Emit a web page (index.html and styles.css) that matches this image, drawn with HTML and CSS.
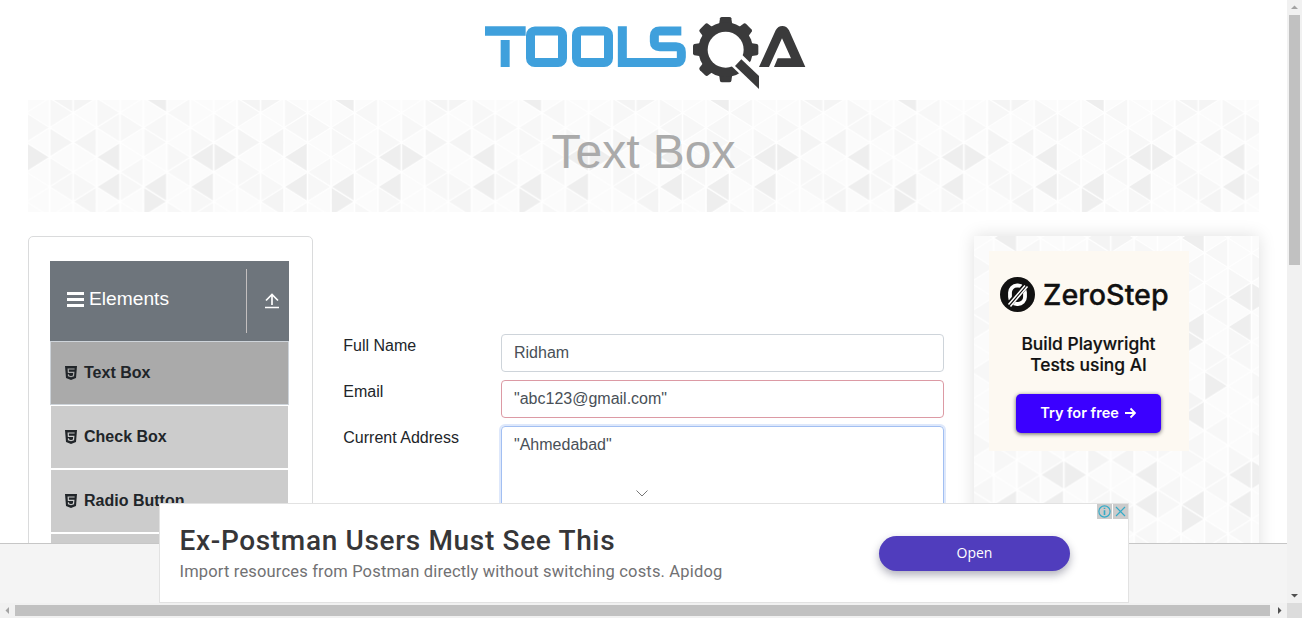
FILE: index.html
```html
<!DOCTYPE html>
<html lang="en">
<head>
<meta charset="utf-8">
<title>ToolsQA - Text Box</title>
<link rel="stylesheet" href="styles.css">
</head>
<body>
<svg class="defs" width="0" height="0" aria-hidden="true">
  <defs>
    <g id="tile" transform="scale(23.44 14.8)">
      <path fill="#fbfbfb" d="M0 0H8V12H0z"/>
      <path fill="#f7f7f7" d="M2 0V2L3 1zM3 1V3L2 2zM3 1V3L4 2zM5 1V3L4 2zM5 3V5L6 4zM6 4V6L5 5zM1 5V7L2 6zM4 4V6L3 5zM4 2V4L5 3zM6 6V8L7 7zM0 4V6L1 5zM7 1V3L8 2zM6 0V2L5 1zM0 0V2L1 1zM7 7V9L6 8zM3 7V9L2 8zM6 8V10L5 9zM2 8V10L3 9zM0 8V10L1 9zM4 8V10L3 9zM7 9V11L8 10zM2 10V12L1 11zM5 7V9L6 8zM1 5V7L0 6zM6 2V4L7 3zM3 5V7L4 6z"/>
      <path fill="#f4f4f4" d="M0 2V4L1 3zM2 2V4L1 3zM2 6V8L1 7zM1 -1V1L0 0zM1 11V13L0 12zM1 -1V1L2 0zM1 11V13L2 12zM4 10V12L5 11z"/>
      <path fill="#eeeeee" d="M7 3V5L8 4zM7 3V5L6 4zM3 3V5L2 4zM3 5V7L2 6zM5 5V7L4 6zM4 6V8L5 7zM7 5V7L6 6zM5 -1V1L4 0zM5 11V13L4 12zM5 9V11L6 10z"/>
      <path class="mesh" d="M0 0V12M1 0V12M2 0V12M3 0V12M4 0V12M5 0V12M6 0V12M7 0V12M8 0V12M0 -8L8 0M0 -6L8 2M0 -4L8 4M0 -2L8 6M0 0L8 8M0 2L8 10M0 4L8 12M0 6L8 14M0 8L8 16M0 10L8 18M0 12L8 20M0 0L8 -8M0 2L8 -6M0 4L8 -4M0 6L8 -2M0 8L8 0M0 10L8 2M0 12L8 4M0 14L8 6M0 16L8 8M0 18L8 10M0 20L8 12"/>
    </g>
    <pattern id="bannerMesh" width="187.52" height="177.6" patternUnits="userSpaceOnUse" patternTransform="translate(21.7 -2)"><use href="#tile"/></pattern>
    <pattern id="panelMesh" width="187.52" height="177.6" patternUnits="userSpaceOnUse" patternTransform="translate(113.3 2)"><use href="#tile"/></pattern>
    <symbol id="html5" viewBox="0 0 12 14"><path fill="#212529" d="M0 0H12L11 12L6 14L1 12z"/><path fill="none" stroke="currentColor" stroke-width="1.2" d="M9.6 3H3.200L3.400 6.300H8.800L8.500 9.900L6 10.700L3.500 9.900L3.400 8.400"/></symbol>
  </defs>
</svg>
<div class="window">
  <main class="view">
    <header class="top">
      <svg class="logo" viewBox="0 0 1020 285" role="img" aria-label="ToolsQA">
        <g fill="#3fa0dc">
          <path d="M30 64H152V92H30zM77 105H104V186H77z"/>
        </g>
        <g fill="none" stroke="#3fa0dc" stroke-width="27">
          <rect x="166.500" y="78" width="96" height="94.500" rx="13"/>
          <rect x="304.500" y="78" width="96" height="94.500" rx="13"/>
          <path d="M442 64V172.500H603Q619 172.500 619 157V141Q619 125 603 125H554Q538 125 538 110V93Q538 78 554 78H619"/>
        </g>
        <g fill="#3a3a3b">
          <g id="teeth">
            <path id="tooth" d="M732 60L735 40Q736 36 741 36H763Q768 36 769 40L772 60z"/>
            <use href="#tooth" transform="rotate(45 752 134)"/><use href="#tooth" transform="rotate(90 752 134)"/><use href="#tooth" transform="rotate(135 752 134)"/><use href="#tooth" transform="rotate(180 752 134)"/><use href="#tooth" transform="rotate(225 752 134)"/><use href="#tooth" transform="rotate(270 752 134)"/><use href="#tooth" transform="rotate(315 752 134)"/>
          </g>
          <circle cx="752" cy="134" r="82"/>
          <circle cx="752" cy="134" r="54" fill="#fff"/>
          <path fill="#fff" d="M770 184L802 150L870 216V280z"/>
          <path d="M780 183L799 163L852 213V252z"/>
          <path d="M852 186L902 76Q909 63 922 63T942 76L991 186H897L908 160H948L921 100L882 186z"/>
        </g>
      </svg>
    </header>
    <div class="banner">
      <svg class="mesh-fill"><rect width="100%" height="100%" fill="url(#bannerMesh)"/></svg>
      <h1>Text Box</h1>
    </div>
    <div class="columns">
      <aside class="sidebar">
        <div class="group">
          <svg class="burger" viewBox="0 0 17 15"><path d="M0 1.500H17M0 7.500H17M0 13.500H17"/></svg>
          <span class="group-name">Elements</span>
          <span class="divider"></span>
          <svg class="up" viewBox="0 0 16 16"><path d="M1 14.500H15M8 12V1.500M2 7.500L8 1.500L14 7.500"/></svg>
        </div>
        <ul class="menu">
          <li class="active"><svg><use href="#html5"/></svg>Text Box</li>
          <li><svg><use href="#html5"/></svg>Check Box</li>
          <li><svg><use href="#html5"/></svg>Radio Button</li>
          <li><svg><use href="#html5"/></svg>Web Tables</li>
        </ul>
      </aside>
      <form class="form">
        <label>Full Name</label><div class="field">Ridham</div>
        <label>Email</label><div class="field error">"abc123@gmail.com"</div>
        <label>Current Address</label><div class="field area">"Ahmedabad"</div>
      </form>
      <aside class="panel">
        <svg class="mesh-fill"><rect width="100%" height="100%" fill="url(#panelMesh)"/></svg>
        <div class="promo">
          <div class="brand">
            <svg viewBox="0 0 35 35"><circle cx="17.500" cy="17.500" r="17.500" fill="#111"/><rect x="10" y="8.500" width="15" height="18.500" rx="7" fill="none" stroke="#fff" stroke-width="3.800"/><path stroke="#111" stroke-width="6" d="M8 29L27 7"/><path stroke="#fff" stroke-width="1.500" d="M8.500 27.500L25 8.500M10.500 29.500L27.500 9.500"/></svg>
            <span>ZeroStep</span>
          </div>
          <p>Build Playwright<br>Tests using AI</p>
          <div class="try">Try for free <svg viewBox="0 0 12 12"><path d="M1 6H11M6.500 1.500L11 6L6.500 10.500"/></svg></div>
        </div>
      </aside>
    </div>
    <div class="dock">
      <svg class="chevron" viewBox="0 0 12 7"><path d="M.5.500L6 6L11.500.500"/></svg>
      <div class="ad">
        <div class="ad-copy">
          <div class="ad-title">Ex-Postman Users Must See This</div>
          <div class="ad-text">Import resources from Postman directly without switching costs. Apidog</div>
        </div>
        <div class="open">Open</div>
        <div class="choices">
          <svg viewBox="0 0 15 15"><circle cx="7.500" cy="7.500" r="5.600"/><path stroke-width="1.600" d="M7.500 6.300V11M7.500 3.700V5.100"/></svg>
          <svg viewBox="0 0 15 15"><path d="M3 3L12 12M12 3L3 12"/></svg>
        </div>
      </div>
    </div>
  </main>
  <div class="vbar"><svg viewBox="0 0 15 15"><path fill="#a3a3a3" d="M4 9L7.500 5.500L11 9z"/></svg><i></i><svg viewBox="0 0 15 15"><path fill="#505050" d="M4 6H11L7.500 9.500z"/></svg></div>
  <div class="hbar"><svg viewBox="0 0 15 15"><path fill="#a3a3a3" d="M9 4V11L5.500 7.500z"/></svg><i></i><svg viewBox="0 0 15 15"><path fill="#505050" d="M6 4V11L9.500 7.500z"/></svg></div>
  <div class="corner"></div>
</div>
</body>
</html>
```

FILE: styles.css
```css
* { box-sizing: border-box; }
body { margin: 0; background: #fff; color: #212529; font: 16px/24px "Liberation Sans", Arial, sans-serif; overflow: hidden; }
svg { display: block; flex: none; }
.defs { position: absolute; }
.mesh { fill: none; stroke: #fff; stroke-width: 0.07; }

.window { display: grid; grid-template: 603px 15px / 1287px 15px; width: 1302px; height: 618px; }
.view { position: relative; overflow: hidden; }

.top { height: 100px; padding: 5px 0 0 475px; }
.logo { width: 340px; height: 95px; }

.banner { position: relative; height: 112px; margin: 0 28px; display: flex; justify-content: center; }
.mesh-fill { position: absolute; inset: 0; width: 100%; height: 100%; }
h1 { position: relative; margin: 23px 0 0; color: #aaa; font-size: 48px; line-height: 58px; font-weight: 400; }

.columns { display: grid; grid-template-columns: 285px 631px 315px; padding: 24px 28px 0; align-items: start; justify-content: start; height: 500px; }
.sidebar { border: 1px solid #dadbdc; border-radius: 5px; height: 480px; padding: 24px 23px 0 21px; }
.group { height: 80px; background: #6e757c; color: #fff; display: flex; align-items: center; padding-left: 17px; }
.burger { width: 17px; height: 15px; margin-top: -3px; }
.burger path { stroke: #fff; stroke-width: 2.800; }
.group-name { font-size: 19.200px; margin: -5px 0 0 5px; width: 157px; }
.divider { width: 1px; height: 64px; background: #c3bfbf; }
.up { width: 16px; height: 16px; margin-left: 16.500px; }
.up path { fill: none; stroke: #fff; stroke-width: 1.700; }
.menu { list-style: none; margin: 0; padding: 0; }
.menu li { height: 64px; display: flex; align-items: center; gap: 7px; padding: 0 0 0 14px; background: #ccc; border: 1px solid #fff; color: #212529; font-weight: 700; }
.menu svg { width: 12px; height: 14px; color: #ccc; }
.menu .active { background: #aaa; border-color: #ced4da; }
.menu .active svg { color: #aaa; }

.form { display: grid; grid-template-columns: 158px 443px; row-gap: 8px; padding: 98px 0 0 30px; margin: 0; }
.form label { line-height: 23px; padding-left: 0.300px; }
.field { height: 38px; border: 1px solid #ced4da; border-radius: 4px; padding: 6px 12px; color: #495057; }
.error { border-color: #dc9aa4; }
.area { height: 134px; border-color: #a2bff2; box-shadow: 0 0 0 2px #dee8fb; }

.panel { position: relative; height: 500px; margin-left: 30px; width: 285px; box-shadow: 0 0 16px rgba(0,0,0,.13); padding: 15px; }
.promo { position: relative; width: 200px; height: 200px; background: #fdf9f2; color: #111; font-family: Inter, sans-serif; display: flex; flex-direction: column; align-items: center; }
.brand { display: flex; align-items: center; gap: 8px; margin-top: 26px; height: 36px; width: 180px; font-size: 28.700px; font-weight: 500; white-space: nowrap; -webkit-text-stroke: 0.300px #111; }
.brand svg { width: 35px; height: 35px; margin: -2px 0 0 1px; }
.promo p { margin: 20px 0 0; padding-right: 1px; font-size: 17.400px; line-height: 21px; font-weight: 500; text-align: center; -webkit-text-stroke: 0.200px #111; }
.try { margin: 19px 2px 0 0; width: 145px; height: 39px; background: #3b00ff; border-radius: 5px; color: #fff; font-size: 14.500px; font-weight: 600; display: flex; align-items: center; justify-content: center; gap: 5px; padding-bottom: 2px; box-shadow: 0 1px 4px rgba(0,0,0,.6); }
.try svg { width: 12px; height: 12px; }
.try path { fill: none; stroke: #fff; stroke-width: 1.800; }

.dock { position: absolute; left: 0; right: 0; bottom: 0; height: 60px; background: #f4f4f4; border-top: 1px solid #c6c6c6; }
.chevron { position: absolute; left: 636px; top: -54px; width: 12px; height: 7px; }
.chevron path { fill: none; stroke: #777; }
.ad { position: absolute; left: 159px; top: -41px; width: 970px; height: 100px; background: #fff; border: 1px solid #e2e2e2; display: flex; font-family: Roboto, sans-serif; }
.ad-copy { width: 719px; padding: 19px 0 0 19.500px; white-space: nowrap; }
.ad-title { color: #363638; font-size: 28px; line-height: 36px; font-weight: 500; letter-spacing: 0.660px; }
.ad-text { color: #717173; font-size: 16.500px; line-height: 26px; letter-spacing: 0.170px; }
.open { width: 191px; height: 35px; margin-top: 32px; border-radius: 18px; background: #503dbd; color: #fff; font: 14px/34px "Open Sans", sans-serif; text-align: center; box-shadow: 0 4px 9px rgba(30,30,60,.35); }
.choices { position: absolute; right: 0; top: 0; display: flex; gap: 1px; }
.choices svg { width: 15px; height: 15px; background: #cbcbcb; fill: none; stroke: #35abc8; stroke-width: 1.200; }

.vbar, .hbar { background: #f1f1f1; display: flex; }
.vbar { flex-direction: column; }
.vbar svg, .hbar svg { width: 15px; height: 15px; }
.vbar i { width: 11px; height: 250px; margin: 0 2px auto; background: #c1c1c1; }
.hbar i { height: 11px; width: 1255px; margin: 2px auto 2px 0; background: #c1c1c1; }
.corner { background: #dcdcdc; }
```
